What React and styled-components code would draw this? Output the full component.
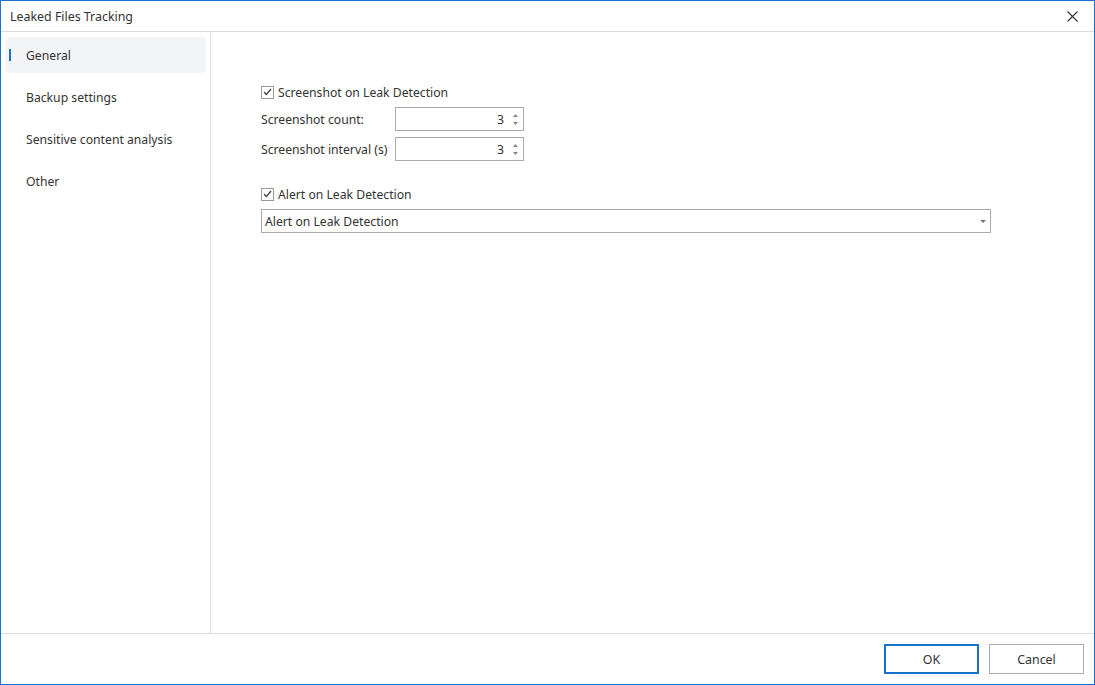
import React from "react";
import styled, { createGlobalStyle } from "styled-components";

const GlobalStyle = createGlobalStyle`
  html, body {
    margin: 0;
    padding: 0;
    background: #ffffff;
  }
  body {
    font-family: "Noto Sans", "Liberation Sans", sans-serif;
    color: #333333;
  }
`;

const Window = styled.div`
  width: 1095px;
  height: 685px;
  box-sizing: border-box;
  border: 1px solid #1873cc;
  display: flex;
  flex-direction: column;
  background: #fff;
`;

const TitleBar = styled.div`
  height: 30px;
  border-bottom: 1px solid #dcdcdc;
  display: flex;
  align-items: center;
  justify-content: space-between;
  padding: 0 0 0 9px;
  flex-shrink: 0;
`;

const Title = styled.span`
  font-size: 12.4px;
  color: #333;
`;

const CloseButton = styled.button`
  width: 44px;
  height: 30px;
  border: none;
  background: transparent;
  display: flex;
  align-items: center;
  justify-content: center;
  padding: 0;
`;

const Body = styled.div`
  flex: 1;
  display: flex;
  min-height: 0;
`;

const Sidebar = styled.nav`
  width: 200px;
  border-right: 1px solid #dcdcdc;
  padding: 5px 4px 5px 5px;
  display: flex;
  flex-direction: column;
  gap: 6px;
`;

const NavItem = styled.div`
  position: relative;
  height: 36px;
  border-radius: 4px;
  display: flex;
  align-items: center;
  padding-left: 20px;
  font-size: 12.2px;
  color: #333;
  white-space: nowrap;
  background: ${({ active }) => (active ? "#f3f4f8" : "transparent")};

  &::before {
    content: "";
    display: ${({ active }) => (active ? "block" : "none")};
    position: absolute;
    left: 3px;
    top: 12px;
    width: 2px;
    height: 12px;
    background: #1873cc;
  }
`;

const Content = styled.div`
  flex: 1;
  padding: 51px 0 0 50px;
  display: flex;
  flex-direction: column;
`;

const CheckRow = styled.label`
  height: 18px;
  display: flex;
  align-items: center;
  gap: 4px;
  font-size: 12.2px;
  color: #333;
  white-space: nowrap;
  margin-top: ${({ spaced }) => (spaced ? "24px" : "0")};
`;

const Box = styled.span`
  width: 11px;
  height: 11px;
  border: 1px solid #9a9a9a;
  background: #fff;
  display: flex;
  align-items: center;
  justify-content: center;
`;

const FieldRow = styled.div`
  display: flex;
  align-items: center;
  margin-top: 6px;
`;

const FieldLabel = styled.span`
  width: 134px;
  font-size: 12.2px;
  color: #333;
  white-space: nowrap;
`;

const SpinBox = styled.div`
  width: 127px;
  height: 22px;
  border: 1px solid #ababab;
  display: flex;
  align-items: center;
  justify-content: flex-end;
  font-size: 12.2px;
  color: #333;
`;

const SpinValue = styled.span`
  margin-right: 5px;
`;

const Spinner = styled.div`
  width: 12px;
  height: 20px;
  margin-right: 2px;
  display: flex;
  flex-direction: column;
  align-items: center;
  justify-content: center;
  gap: 5px;
`;

const Select = styled.div`
  width: 725px;
  height: 22px;
  border: 1px solid #ababab;
  margin-top: 6px;
  display: flex;
  align-items: center;
  justify-content: space-between;
  padding-left: 3px;
  font-size: 12.2px;
  color: #333;
`;

const Caret = styled.span`
  width: 0;
  height: 0;
  border-left: 3px solid transparent;
  border-right: 3px solid transparent;
  border-top: 3px solid #777;
  margin-right: 4px;
`;

const Footer = styled.div`
  height: 50px;
  border-top: 1px solid #dcdcdc;
  display: flex;
  align-items: center;
  justify-content: flex-end;
  gap: 10px;
  padding-right: 10px;
  flex-shrink: 0;
`;

const Button = styled.button`
  width: 95px;
  height: 30px;
  box-sizing: border-box;
  background: #fff;
  font-family: "Noto Sans", "Liberation Sans", sans-serif;
  font-size: 12.4px;
  color: #333;
  border: ${({ primary }) => (primary ? "2px solid #1873cc" : "1px solid #adadad")};
  padding: 0;
`;

const Arrow = ({ up }) => (
  <svg width="5" height="3" viewBox="0 0 5 3">
    <polygon points={up ? "0,3 5,3 2.5,0" : "0,0 5,0 2.5,3"} fill="#888" />
  </svg>
);

const Check = () => (
  <Box>
    <svg width="9" height="8" viewBox="0 0 9 8">
      <polyline points="1,4 3.4,6.5 8,1" fill="none" stroke="#444" strokeWidth="1.3" />
    </svg>
  </Box>
);

const NumberField = ({ label, value }) => (
  <FieldRow>
    <FieldLabel>{label}</FieldLabel>
    <SpinBox>
      <SpinValue>{value}</SpinValue>
      <Spinner>
        <Arrow up />
        <Arrow />
      </Spinner>
    </SpinBox>
  </FieldRow>
);

const navItems = ["General", "Backup settings", "Sensitive content analysis", "Other"];

export default function App() {
  return (
    <>
      <GlobalStyle />
      <Window>
        <TitleBar>
          <Title>Leaked Files Tracking</Title>
          <CloseButton aria-label="Close">
            <svg width="11" height="11" viewBox="0 0 11 11">
              <path d="M0.5 0.5 L10.5 10.5 M10.5 0.5 L0.5 10.5" stroke="#333" strokeWidth="1.1" />
            </svg>
          </CloseButton>
        </TitleBar>
        <Body>
          <Sidebar>
            {navItems.map((item, i) => (
              <NavItem key={item} active={i === 0}>
                {item}
              </NavItem>
            ))}
          </Sidebar>
          <Content>
            <CheckRow>
              <Check />
              Screenshot on Leak Detection
            </CheckRow>
            <NumberField label="Screenshot count:" value="3" />
            <NumberField label="Screenshot interval (s)" value="3" />
            <CheckRow spaced>
              <Check />
              Alert on Leak Detection
            </CheckRow>
            <Select>
              <span>Alert on Leak Detection</span>
              <Caret />
            </Select>
          </Content>
        </Body>
        <Footer>
          <Button primary>OK</Button>
          <Button>Cancel</Button>
        </Footer>
      </Window>
    </>
  );
}
